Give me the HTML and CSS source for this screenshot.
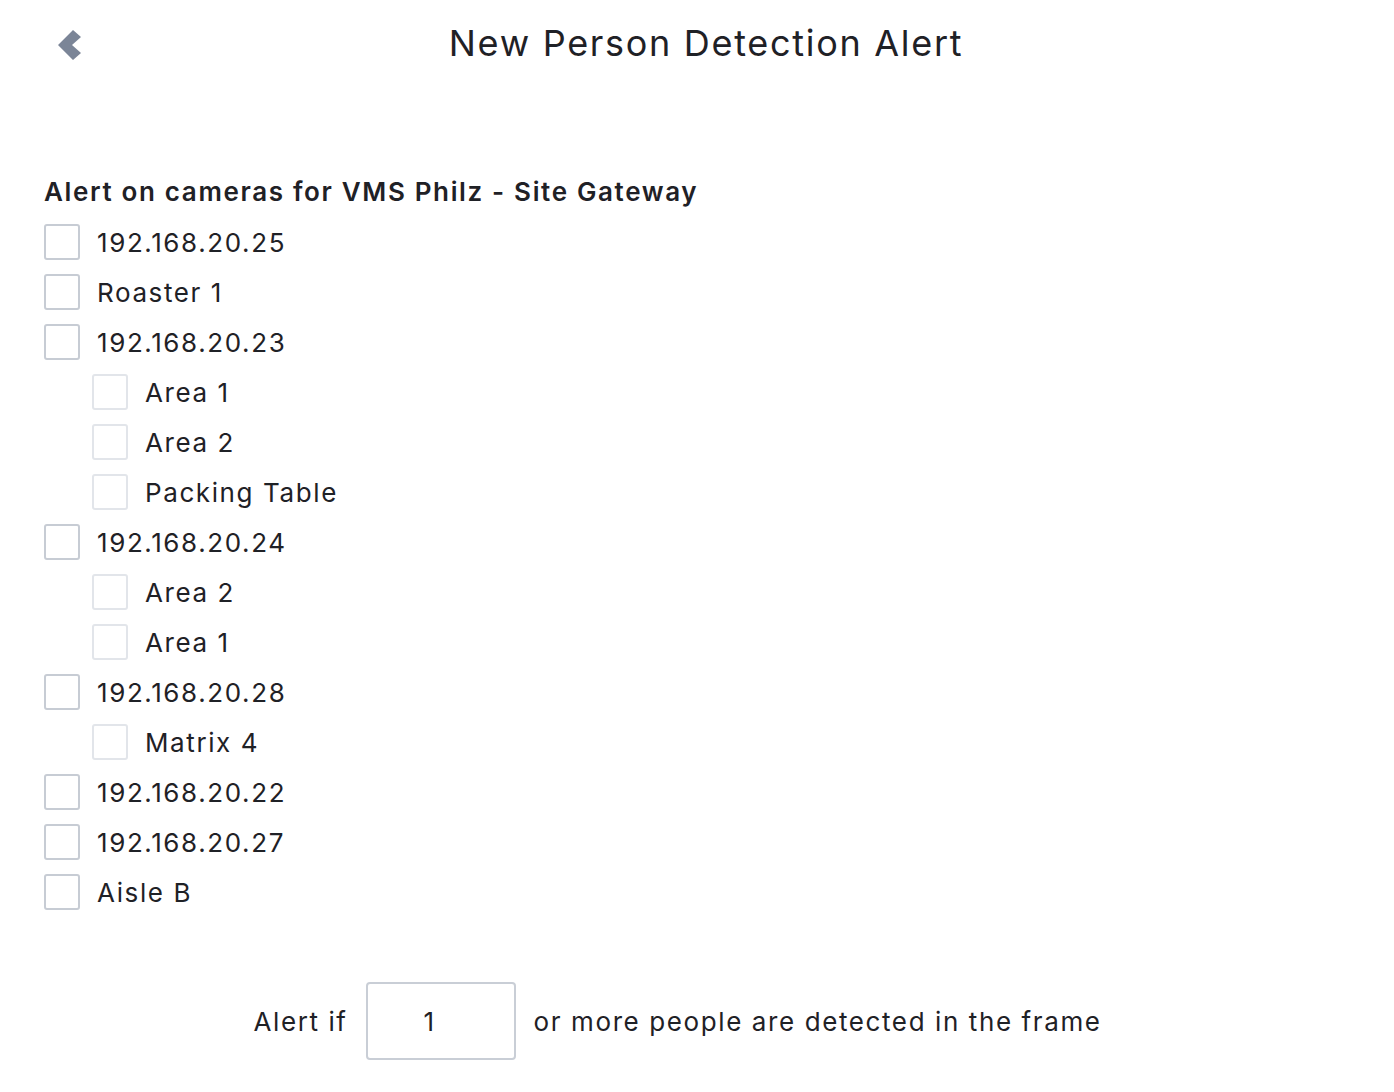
FILE: index.html
```html
<!DOCTYPE html>
<html lang="en">
<head>
    <meta charset="UTF-8">
    <meta name="viewport" content="width=device-width, initial-scale=1.0">
    <title>New Person Detection Alert</title>
    <link rel="stylesheet" href="styles.css">
</head>
<body>
    <header class="top-bar">
        <a class="back" href="#">
            <svg width="27" height="34" viewBox="0 0 27 34"><path d="M2 17 L17 2 L25 9 L16 17 L25 25 L17 32 Z" fill="#7b8597"/></svg>
        </a>
        <h1>New Person Detection Alert</h1>
    </header>

    <section class="cameras">
        <h2>Alert on cameras for VMS Philz - Site Gateway</h2>
        <ul class="camera-list">
            <li><label><input type="checkbox"><span class="box"></span>192.168.20.25</label></li>
            <li><label><input type="checkbox"><span class="box"></span>Roaster 1</label></li>
            <li><label><input type="checkbox"><span class="box"></span>192.168.20.23</label>
                <ul class="zones">
                    <li><label><input type="checkbox"><span class="box"></span>Area 1</label></li>
                    <li><label><input type="checkbox"><span class="box"></span>Area 2</label></li>
                    <li><label><input type="checkbox"><span class="box"></span>Packing Table</label></li>
                </ul>
            </li>
            <li><label><input type="checkbox"><span class="box"></span>192.168.20.24</label>
                <ul class="zones">
                    <li><label><input type="checkbox"><span class="box"></span>Area 2</label></li>
                    <li><label><input type="checkbox"><span class="box"></span>Area 1</label></li>
                </ul>
            </li>
            <li><label><input type="checkbox"><span class="box"></span>192.168.20.28</label>
                <ul class="zones">
                    <li><label><input type="checkbox"><span class="box"></span>Matrix 4</label></li>
                </ul>
            </li>
            <li><label><input type="checkbox"><span class="box"></span>192.168.20.22</label></li>
            <li><label><input type="checkbox"><span class="box"></span>192.168.20.27</label></li>
            <li><label><input type="checkbox"><span class="box"></span>Aisle B</label></li>
        </ul>
    </section>

    <div class="threshold">
        <span>Alert if</span>
        <input type="text" value="1">
        <span>or more people are detected in the frame</span>
    </div>
</body>
</html>
```

FILE: styles.css
```css
body {
    font-family: Inter, "Noto Sans", sans-serif;
    margin: 0;
    padding: 0;
    background-color: #ffffff;
    color: #1f2126;
}
.top-bar {
    display: flex;
    align-items: center;
    justify-content: center;
    height: 86px;
    padding-left: 18px;
    position: relative;
}
.top-bar .back {
    position: absolute;
    left: 56px;
    top: 28px;
}
.top-bar h1 {
    margin: 0;
    font-size: 36px;
    font-weight: 400;
    letter-spacing: 1.7px;
}
.cameras {
    padding: 90px 0 0 44px;
}
.cameras h2 {
    margin: 0 0 10px;
    font-size: 26px;
    font-weight: 600;
    letter-spacing: 1.65px;
}
.camera-list,
.zones {
    list-style: none;
    margin: 0;
    padding: 0;
}
.zones {
    padding-left: 48px;
}
.camera-list label {
    display: flex;
    align-items: center;
    height: 50px;
    font-size: 26px;
    letter-spacing: 1.6px;
    cursor: pointer;
}
.camera-list input {
    display: none;
}
.box {
    width: 32px;
    height: 32px;
    border: 2px solid #c7ccd4;
    border-radius: 3px;
    margin-right: 17px;
    flex-shrink: 0;
}
.zones .box {
    border-color: #e2e5ea;
}
.threshold {
    display: flex;
    align-items: center;
    justify-content: center;
    gap: 18px;
    margin-top: 65px;
    padding-right: 39px;
    font-size: 26px;
    letter-spacing: 1.6px;
}
.threshold input {
    width: 150px;
    height: 78px;
    box-sizing: border-box;
    border: 2px solid #c9ced6;
    border-radius: 4px;
    padding: 0 0 0 56px;
    font-family: inherit;
    font-size: 26px;
    color: #1f2126;
}
```
